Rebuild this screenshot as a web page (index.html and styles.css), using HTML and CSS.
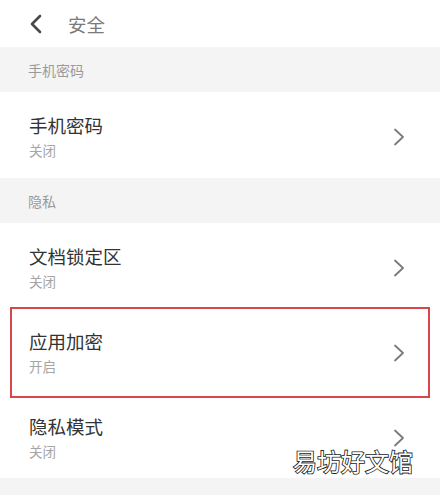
FILE: index.html
```html
<!DOCTYPE html>
<html lang="zh-CN">
<head>
<meta charset="utf-8">
<link rel="stylesheet" href="styles.css">
</head>
<body>
<div class="page">
  <header class="topbar">
    <svg class="back" width="16" height="20" viewBox="0 0 16 20"><path d="M12 2 L4 10 L12 18" fill="none" stroke="#4a4a4a" stroke-width="2.6" stroke-linecap="round" stroke-linejoin="round"/></svg>
    <span class="title">安全</span>
  </header>
  <div class="section">手机密码</div>
  <div class="row first">
    <div class="texts"><div class="name">手机密码</div><div class="state">关闭</div></div>
    <svg class="chev" width="12" height="18" viewBox="0 0 12 18"><path d="M2 1.5 L10 9 L2 16.5" fill="none" stroke="#7a7a7a" stroke-width="1.8" stroke-linecap="round" stroke-linejoin="round"/></svg>
  </div>
  <div class="section">隐私</div>
  <div class="row">
    <div class="texts"><div class="name">文档锁定区</div><div class="state">关闭</div></div>
    <svg class="chev" width="12" height="18" viewBox="0 0 12 18"><path d="M2 1.5 L10 9 L2 16.5" fill="none" stroke="#7a7a7a" stroke-width="1.8" stroke-linecap="round" stroke-linejoin="round"/></svg>
  </div>
  <div class="row marked">
    <div class="texts"><div class="name">应用加密</div><div class="state">开启</div></div>
    <svg class="chev" width="12" height="18" viewBox="0 0 12 18"><path d="M2 1.5 L10 9 L2 16.5" fill="none" stroke="#7a7a7a" stroke-width="1.8" stroke-linecap="round" stroke-linejoin="round"/></svg>
  </div>
  <div class="row">
    <div class="texts"><div class="name">隐私模式</div><div class="state">关闭</div></div>
    <svg class="chev" width="12" height="18" viewBox="0 0 12 18"><path d="M2 1.5 L10 9 L2 16.5" fill="none" stroke="#7a7a7a" stroke-width="1.8" stroke-linecap="round" stroke-linejoin="round"/></svg>
    <span class="watermark">易坊好文馆</span>
  </div>
  <div class="section"></div>
</div>
</body>
</html>
```
FILE: styles.css
```css
* { box-sizing: border-box; margin: 0; padding: 0; }
html, body { background: #fff; }
body {
  width: 440px;
  height: 495px;
  overflow: hidden;
  font-family: "Noto Sans CJK SC", "Noto Sans", sans-serif;
}
.page {
  display: flex;
  flex-direction: column;
  height: 495px;
  overflow: hidden;
}
.topbar {
  height: 47px;
  display: flex;
  align-items: center;
  padding-left: 28px;
  gap: 24px;
  flex-shrink: 0;
}
.topbar .back { margin-top: 1px; }
.title {
  font-size: 18.5px;
  line-height: 24px;
  color: #7a7a7a;
}
.section {
  height: 45px;
  background: #f4f4f4;
  display: flex;
  align-items: center;
  padding-left: 28px;
  font-size: 14px;
  color: #9a9a9a;
  flex-shrink: 0;
}
.section:last-child { height: 17px; }
.row {
  position: relative;
  height: 85px;
  display: flex;
  align-items: flex-start;
  justify-content: space-between;
  padding: 21px 35px 0 29px;
  flex-shrink: 0;
}
.row.first { height: 86px; }
.texts { display: flex; flex-direction: column; gap: 3px; }
.name {
  font-size: 18.5px;
  line-height: 24px;
  color: #333;
}
.state {
  font-size: 13.5px;
  line-height: 20px;
  color: #a5a5a5;
}
.chev { margin-top: 15px; }
.marked::after {
  content: "";
  position: absolute;
  left: 10px;
  right: 10px;
  top: -1px;
  bottom: -5px;
  border: 2.5px solid #d8464c;
  pointer-events: none;
}
.watermark {
  position: absolute;
  right: 27px;
  top: 53px;
  font-size: 24px;
  line-height: 30px;
  color: #fff;
  -webkit-text-stroke: 1.7px #222;
  paint-order: stroke fill;
}
```
